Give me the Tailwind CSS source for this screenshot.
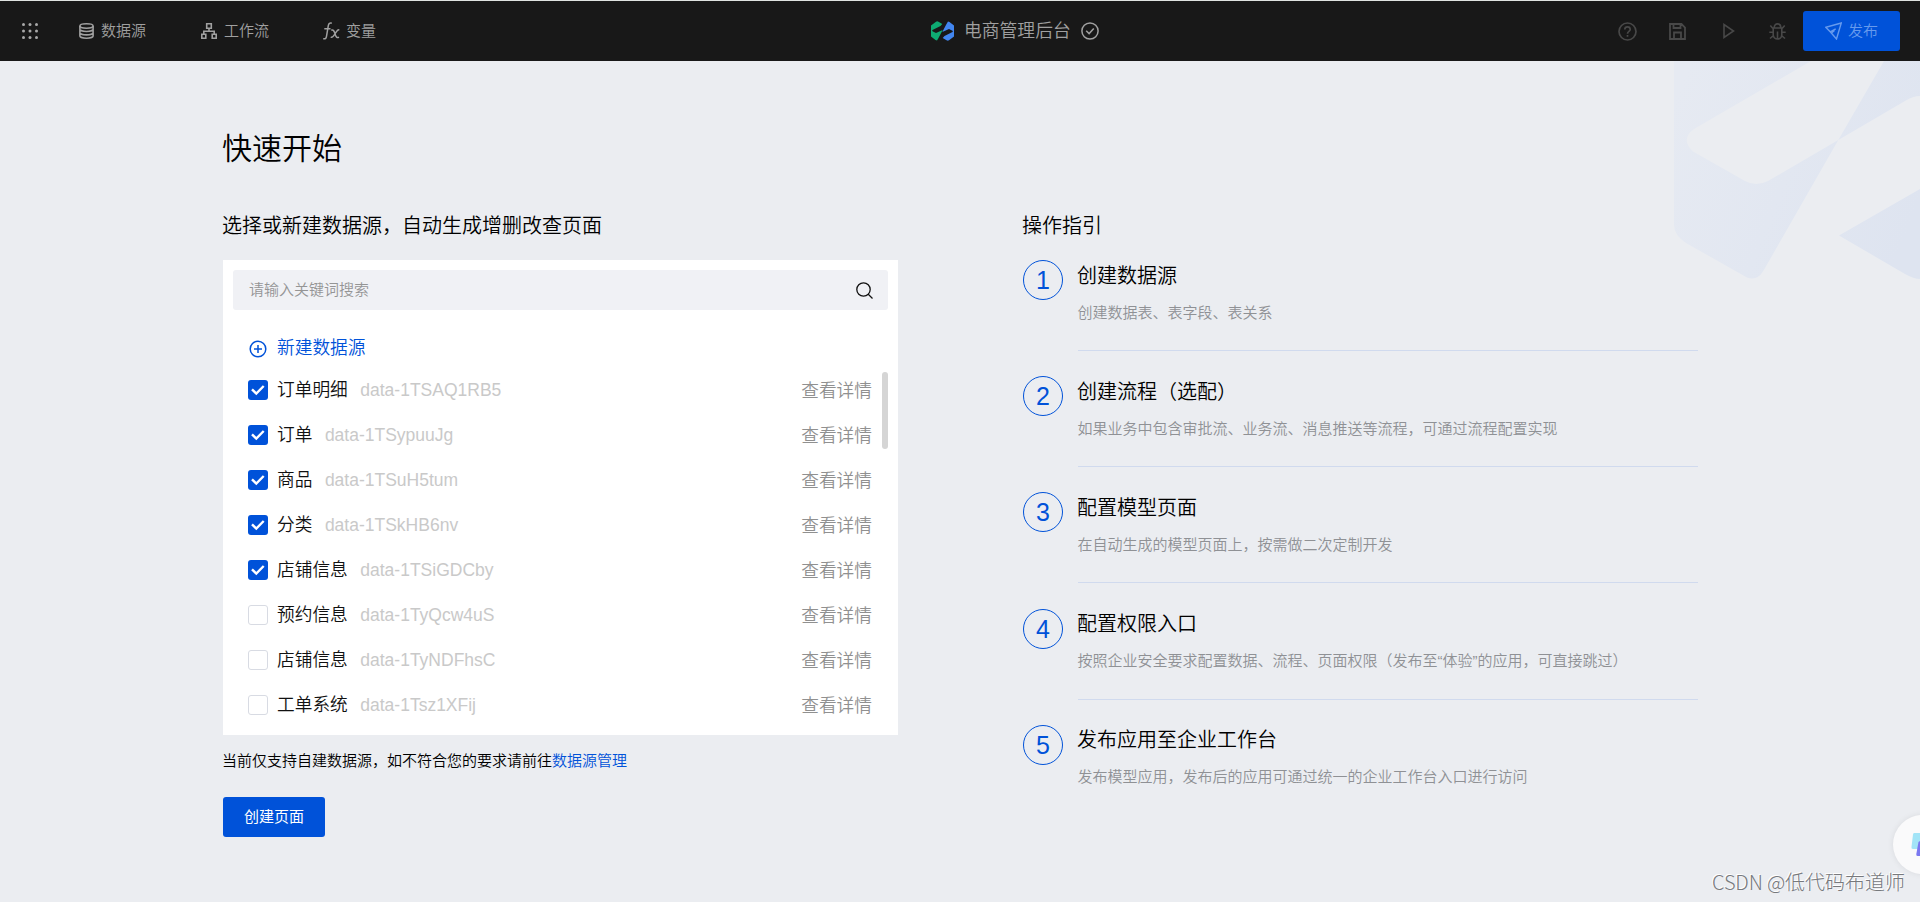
<!DOCTYPE html>
<html lang="zh-CN">
<head>
<meta charset="utf-8">
<title>电商管理后台</title>
<script src="https://cdn.jsdelivr.net/npm/@tailwindcss/browser@4"></script>
</head>
<body class="relative h-[902px] overflow-hidden bg-[#ebedf1] font-['Liberation_Sans','Noto_Sans_CJK_SC',sans-serif] font-[350] text-[15px] text-black">

<header class="relative flex h-[61px] items-center border-t border-[#dfe3e0] bg-[#181818] text-[#a0a0a0]">
  <div class="flex w-[931px] items-center pl-[22px]">
    <svg class="size-4 shrink-0" viewBox="0 0 16 16" fill="#a8a8a8"><circle cx="1.500" cy="1.500" r="1.500"/><circle cx="8" cy="1.500" r="1.500"/><circle cx="14.500" cy="1.500" r="1.500"/><circle cx="1.500" cy="8" r="1.500"/><circle cx="8" cy="8" r="1.500"/><circle cx="14.500" cy="8" r="1.500"/><circle cx="1.500" cy="14.500" r="1.500"/><circle cx="8" cy="14.500" r="1.500"/><circle cx="14.500" cy="14.500" r="1.500"/></svg>
    <div class="ml-[41px] flex items-center gap-[7px]">
      <svg class="h-4 w-[15px]" viewBox="0 0 15 16" fill="none" stroke="currentColor" stroke-width="1.600"><ellipse cx="7.500" cy="3" rx="6.600" ry="2.200"/><path d="M.9 3v10c0 1.200 3 2.200 6.600 2.200s6.600-1 6.600-2.200V3M.9 6.300c0 1.200 3 2.200 6.600 2.200s6.600-1 6.600-2.200M.9 9.700c0 1.200 3 2.200 6.600 2.200s6.600-1 6.600-2.200"/></svg>
      <span class="leading-5">数据源</span>
    </div>
    <div class="ml-[55px] flex items-center gap-[7px]">
      <svg class="h-4 w-4" viewBox="0 0 16 16" fill="none" stroke="currentColor" stroke-width="1.600"><path d="M5.700.8h4.600v4.400H5.700zM.8 11.300h4v3.900h-4zM11.200 11.300h4v3.900h-4zM8 5.200v3M2.800 11.300V8.200h10.400v3.100"/></svg>
      <span class="leading-5">工作流</span>
    </div>
    <div class="ml-[54px] flex items-center gap-[6px]">
      <svg class="h-[18px] w-[17px]" viewBox="0 0 17 18" fill="none" stroke="currentColor" stroke-width="1.500"><path d="M8.800 1.200C6.800.5 5.700 1.300 5.300 3.700L3.500 14.300C3.200 16.500 2 17.300.2 16.600M1.300 6.800h6.200M8.300 8.300c1.800-.8 2.600.3 3.300 2.300l.9 2.600c.7 2 1.700 2.900 3.500 1.900M16.300 7.900c-1.300-.3-2 .4-3 1.900l-2.700 4c-.9 1.300-1.700 1.700-2.900 1.300"/></svg>
      <span class="leading-5">变量</span>
    </div>
  </div>
  <div class="flex items-center">
    <svg class="h-5 w-[23px]" viewBox="0 0 23 20"><path fill="#0eab72" d="M0 4.500 5 .7Q6.200 0 7.500.7L11.300 3 9.500 5 1.500 9Q.8 9.700 1.500 10.300L5 12 11.700 9 7.500 17 6 19.500 4.500 19 0 15.500z"/><path fill="#4286f0" d="M23 15.500l-5 3.800q-1.200.7-2.500 0L11.700 17l1.800-2L21.500 11q.7-.7 0-1.300L18 8 11.300 11 15.500 3 17 .5 18.500 1 23 4.500z"/></svg>
    <span class="ml-[10px] text-[17.800px] leading-6">电商管理后台</span>
    <svg class="ml-[10px] size-[18px]" viewBox="0 0 18 18" fill="none" stroke="currentColor" stroke-width="1.500"><circle cx="9" cy="9" r="8.100"/><path d="m5.200 8.800 2.900 2.800 4.700-5"/></svg>
  </div>
  <div class="ml-auto flex items-center pr-5 text-[#484848]">
    <svg class="size-[19px]" viewBox="0 0 19 19" fill="none" stroke="currentColor" stroke-width="1.700"><circle cx="9.500" cy="9.500" r="8.500"/><path d="M6.800 7.500c0-3.400 5.400-3.400 5.400 0 0 1.900-2.700 1.900-2.700 4.200M9.500 13v1.700"/></svg>
    <svg class="ml-8 size-[17px]" viewBox="0 0 17 17" fill="none" stroke="currentColor" stroke-width="1.800"><path d="M1 1h11.500L16 4.500V16H1zM4.500 1v4h7V1M5 16V9.500h7V16"/></svg>
    <svg class="ml-[37px] h-4 w-3" viewBox="0 0 12 16" fill="none" stroke="currentColor" stroke-width="1.600"><path d="M1 1.500v13L10.500 8z"/></svg>
    <svg class="ml-[34px] size-[17px]" viewBox="0 0 17 17" fill="none" stroke="currentColor" stroke-width="1.600"><path d="M5.200 4.800C5.200-.4 11.800-.4 11.800 4.800M3 5h11M4.200 5v6.500c0 6 8.600 6 8.600 0V5M8.500 8.500V16M.3 9.300h3.900M12.800 9.300h3.900M1.300 2.500 3.500 5M15.700 2.500 13.500 5M1 15.500l3.500-3M16 15.500l-3.500-3"/></svg>
    <button class="ml-[17px] flex h-10 w-[97px] items-center justify-center gap-[6px] rounded-[3px] bg-[#0052d9] text-[#669aed]">
      <svg class="h-[18px] w-[17px]" viewBox="0 0 17 18" fill="none" stroke="currentColor" stroke-width="1.400"><path d="M16.300 1 .8 5.300l4.400 4.500L11.500 17zM5.200 9.800l5.500-3M6.500 11l3-2.500"/></svg>
      <span class="leading-5">发布</span>
    </button>
  </div>
</header>

<svg class="absolute top-[61px] left-[1674px] h-[219px] w-[246px]" viewBox="1674 61 246 219">
  <defs><linearGradient id="mark" gradientUnits="userSpaceOnUse" x1="1674" y1="100" x2="1920" y2="200"><stop stop-color="#e6eaf2"/><stop offset="1" stop-color="#dee4f0"/></linearGradient></defs>
  <path fill="url(#mark)" d="M1674 61V225Q1674 235 1686 243L1747 277.500Q1757 281 1763 271.500L1838.300 140 1768 181Q1756 187 1745 181L1693 151.500Q1680 139 1694 129L1811 61zM1838.300 140 1884 61H1920V96Q1913 96 1905 101zM1839 235.500 1920 189V279Q1914 279 1905 274z"/>
</svg>

<main class="relative flex pl-[223px]">
  <section class="w-[675px]">
    <h1 class="-ml-px mt-[68px] text-[30px] leading-[40px]">快速开始</h1>
    <h2 class="-ml-px mt-[42px] text-[20px] leading-[30px]">选择或新建数据源，自动生成增删改查页面</h2>
    <div class="mt-[19px] h-[475px] bg-white p-[10px]">
      <div class="flex h-10 items-center justify-between rounded-[3px] bg-[#f0f1f5] pr-[15px] pl-4">
        <span class="text-[#959595]">请输入关键词搜索</span>
        <svg class="size-[17px]" viewBox="0 0 17 17" fill="none" stroke="#111" stroke-width="1.300"><circle cx="7.500" cy="7.500" r="6.700"/><path d="m12 12 4.500 4.500"/></svg>
      </div>
      <div class="mt-[26px] flex h-[26px] items-center gap-[10px] pl-4 text-[17.700px] text-[#0052d9]">
        <svg class="size-[18px]" viewBox="0 0 18 18" fill="none" stroke="currentColor" stroke-width="1.500"><circle cx="9" cy="9" r="7.800"/><path d="M9 5v8M5 9h8"/></svg>
        <span class="-mt-[2px]">新建数据源</span>
      </div>
      <div class="mt-[5px] flex">
        <ul id="sources" class="flex-1 pl-[15px]"></ul>
        <div class="mt-[5px] ml-[10px] h-[77px] w-[6px] rounded-full bg-[#d5d5d5]"></div>
      </div>
    </div>
    <p class="-ml-px mt-[15px] leading-[22px]">当前仅支持自建数据源，如不符合您的要求请前往<a class="text-[#0052d9]">数据源管理</a></p>
    <button class="mt-[25px] flex h-10 w-[102px] items-center justify-center rounded-[3px] bg-[#0052d9] font-normal text-white">创建页面</button>
  </section>
  <section class="ml-[125px] w-[675px] pt-[150px]">
    <h2 class="-ml-px text-[20px] leading-[30px]">操作指引</h2>
    <ol id="steps" class="mt-[19px]"></ol>
  </section>
</main>

<div class="absolute top-[815px] left-[1892.500px] size-[59px] rounded-full bg-[#fafafb] shadow-[0_0_6px_rgba(0,0,0,0.08)]"></div>
<svg class="absolute top-[830px] left-[1908px] h-[30px] w-3" viewBox="0 0 12 30"><path fill="#a2e4f7" d="M6 3h6v11L9.500 19H5q-2 0-1.500-2L5 4.500Q5.200 3 6 3z"/><path fill="#7b78f0" d="M10.500 12 12 11v15H9.500Q8 26 8.300 24z"/></svg>
<div class="absolute top-[867px] left-[1712px] font-['Noto_Sans_CJK_SC',sans-serif] text-[20px] leading-[30px] font-light whitespace-nowrap text-[#77797d] [text-shadow:-1px_-1px_0_#fff]"><span class="tracking-[-0.150px]">CSDN @</span>低代码布道师</div>

<script>
  const sources = [
    ['订单明细', 'data-1TSAQ1RB5', true],
    ['订单', 'data-1TSypuuJg', true],
    ['商品', 'data-1TSuH5tum', true],
    ['分类', 'data-1TSkHB6nv', true],
    ['店铺信息', 'data-1TSiGDCby', true],
    ['预约信息', 'data-1TyQcw4uS', false],
    ['店铺信息', 'data-1TyNDFhsC', false],
    ['工单系统', 'data-1Tsz1XFij', false],
  ];
  const on = '<span class="flex size-5 items-center justify-center rounded-[3px] bg-[#0052d9]"><svg class="size-5" viewBox="0 0 20 20" fill="none" stroke="#fff" stroke-width="2.400"><path d="m4 9.300 4.300 4.200 7.400-7.500"/></svg></span>';
  const off = '<span class="size-5 rounded-[3px] border border-[#d8dbe3] bg-white"></span>';
  document.getElementById('sources').innerHTML = sources.map(([name, id, checked]) =>
    `<li class="flex h-[45px] items-center text-[17.500px] leading-[25px]">${checked ? on : off}<span class="ml-[9px] pt-[2px] text-[17.700px] text-[#111]">${name}</span><span class="ml-[12.500px] pt-px font-normal text-[#c9c9c9]">${id}</span><span class="ml-auto pt-[3px] text-[17.700px] text-[#909090]">查看详情</span></li>`).join('');

  const steps = [
    ['创建数据源', '创建数据表、表字段、表关系'],
    ['创建流程（选配）', '如果业务中包含审批流、业务流、消息推送等流程，可通过流程配置实现'],
    ['配置模型页面', '在自动生成的模型页面上，按需做二次定制开发'],
    ['配置权限入口', '按照企业安全要求配置数据、流程、页面权限（发布至“体验”的应用，可直接跳过）'],
    ['发布应用至企业工作台', '发布模型应用，发布后的应用可通过统一的企业工作台入口进行访问'],
  ];
  document.getElementById('steps').innerHTML = steps.map(([title, text], i) =>
    `<li class="group flex h-[116.200px] gap-[15px]"><span class="flex size-10 shrink-0 items-center justify-center rounded-full border border-[#0052d9] pt-px text-[25px] leading-none font-normal text-[#0052d9]">${i + 1}</span><div class="h-[91px] flex-1 border-b border-[#d0daee] group-last:border-b-0"><h3 class="-ml-px pt-[0.500px] text-[20px] leading-[30px]">${title}</h3><p class="-ml-[0.500px] mt-[11px] leading-[22px] text-[#8f9195]">${text}</p></div></li>`).join('');
</script>
</body>
</html>
